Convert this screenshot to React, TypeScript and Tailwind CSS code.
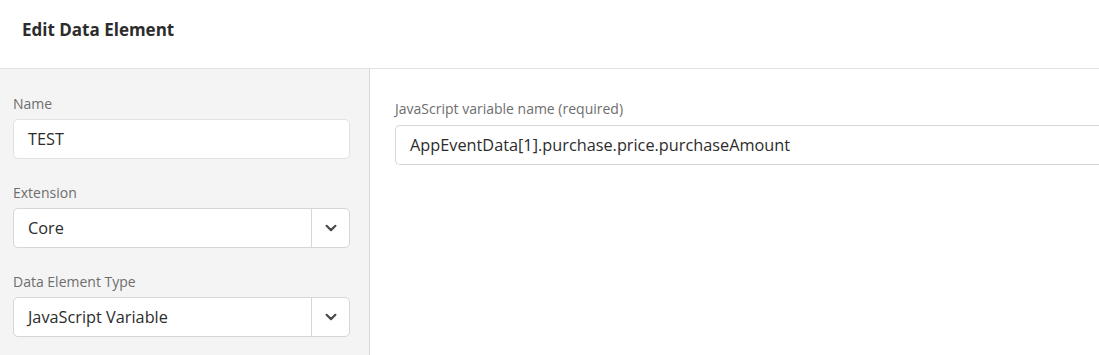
import React from "react";

function Chevron() {
  return (
    <svg width="12" height="12" viewBox="0 0 12 12" fill="none">
      <path d="M1.6 3.8 L6 8.1 L10.4 3.8" stroke="#4b4b4b" strokeWidth="2.2" strokeLinecap="round" strokeLinejoin="round" />
    </svg>
  );
}

function Select({ value }: { value: string }) {
  return (
    <div className="flex h-[40px] w-[337px] rounded-[5px] border border-[#d6d6d6] bg-white">
      <div className="flex flex-1 items-center pl-[14px] text-[16.3px] text-[#2c2c2c]">{value}</div>
      <div className="flex w-[38px] items-center justify-center border-l border-[#d6d6d6]">
        <Chevron />
      </div>
    </div>
  );
}

export default function App() {
  return (
    <div className="h-[355px] w-[1099px] overflow-hidden bg-white" style={{ fontFamily: "'Open Sans', sans-serif" }}>
      <div className="flex h-[69px] items-center border-b border-[#e2e2e2] pl-[22px] pb-[8px]">
        <h1 className="text-[17px] font-bold text-[#2c2c2c]">Edit Data Element</h1>
      </div>
      <div className="flex h-[286px]">
        <div className="w-[370px] shrink-0 border-r border-[#d8d8d8] bg-[#f4f4f4] pl-[13px] pt-[25px]">
          <div className="mb-[6px] text-[14px] leading-[19px] text-[#6e6e6e]">Name</div>
          <div className="flex h-[40px] w-[337px] items-center rounded-[5px] border border-[#e1e1e1] bg-white pl-[14px] text-[16.3px] text-[#2c2c2c]">
            TEST
          </div>
          <div className="mb-[6px] mt-[24px] text-[14px] leading-[19px] text-[#6e6e6e]">Extension</div>
          <Select value="Core" />
          <div className="mb-[6px] mt-[24px] text-[14px] leading-[19px] text-[#6e6e6e]">Data Element Type</div>
          <Select value="JavaScript Variable" />
        </div>
        <div className="flex-1 pl-[25px] pt-[30px]">
          <div className="mb-[7px] text-[14px] leading-[19px] text-[#6e6e6e]">JavaScript variable name (required)</div>
          <div className="flex h-[40px] w-[760px] items-center rounded-l-[5px] border border-r-0 border-[#d6d6d6] bg-white pl-[14px] text-[16.3px] text-[#2c2c2c]">
            AppEventData[1].purchase.price.purchaseAmount
          </div>
        </div>
      </div>
    </div>
  );
}
